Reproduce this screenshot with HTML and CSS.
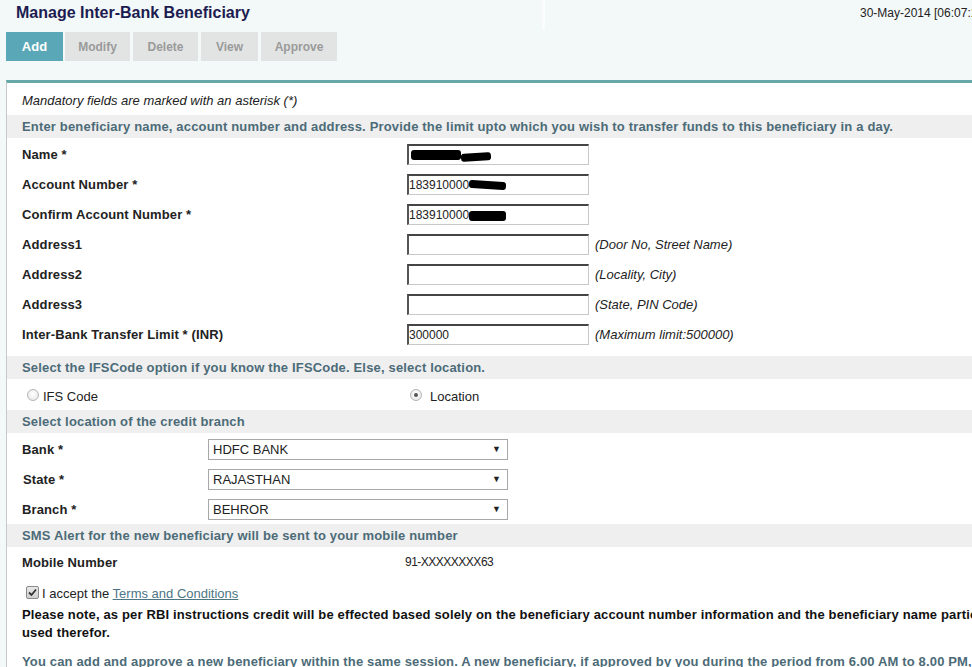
FILE: index.html
```html
<!DOCTYPE html>
<html>
<head>
<meta charset="utf-8">
<link rel="stylesheet" href="styles.css">
</head>
<body>
<div class="page">
  <header class="top">
    <div class="top-left">
      <h1 class="title">Manage Inter-Bank Beneficiary</h1>
      <nav class="tabs">
        <span class="tab active">Add</span>
        <span class="tab">Modify</span>
        <span class="tab">Delete</span>
        <span class="tab">View</span>
        <span class="tab">Approve</span>
      </nav>
    </div>
    <div class="top-right">30-May-2014 [06:07:12 PM]</div>
  </header>

  <main class="panel">
    <p class="mandatory">Mandatory fields are marked with an asterisk (*)</p>
    <div class="band">Enter beneficiary name, account number and address. Provide the limit upto which you wish to transfer funds to this beneficiary in a day.</div>

    <div class="fields">
      <div class="row">
        <label class="lbl">Name *</label>
        <div class="inp"><span class="mask m1"></span><span class="mask m1b"></span></div>
        <span class="hint"></span>
      </div>
      <div class="row">
        <label class="lbl">Account Number *</label>
        <div class="inp">183910000<span class="mask m2"></span></div>
        <span class="hint"></span>
      </div>
      <div class="row">
        <label class="lbl">Confirm Account Number *</label>
        <div class="inp">183910000<span class="mask m3"></span></div>
        <span class="hint"></span>
      </div>
      <div class="row">
        <label class="lbl">Address1</label>
        <div class="inp"></div>
        <span class="hint">(Door No, Street Name)</span>
      </div>
      <div class="row">
        <label class="lbl">Address2</label>
        <div class="inp"></div>
        <span class="hint">(Locality, City)</span>
      </div>
      <div class="row">
        <label class="lbl">Address3</label>
        <div class="inp"></div>
        <span class="hint">(State, PIN Code)</span>
      </div>
      <div class="row">
        <label class="lbl">Inter-Bank Transfer Limit * (INR)</label>
        <div class="inp">300000</div>
        <span class="hint">(Maximum limit:500000)</span>
      </div>
    </div>

    <div class="band">Select the IFSCode option if you know the IFSCode. Else, select location.</div>
    <div class="radios">
      <div class="radio-opt"><span class="radio"></span>IFS Code</div>
      <div class="radio-opt"><span class="radio checked"></span>Location</div>
    </div>

    <div class="band">Select location of the credit branch</div>
    <div class="selects">
      <div class="srow">
        <label class="lbl">Bank *</label>
        <div class="sel"><span>HDFC BANK</span><span class="arrow">▼</span></div>
      </div>
      <div class="srow">
        <label class="lbl lbl-shift">State *</label>
        <div class="sel"><span>RAJASTHAN</span><span class="arrow">▼</span></div>
      </div>
      <div class="srow">
        <label class="lbl">Branch *</label>
        <div class="sel"><span>BEHROR</span><span class="arrow">▼</span></div>
      </div>
    </div>

    <div class="band">SMS Alert for the new beneficiary will be sent to your mobile number</div>
    <div class="mobile">
      <label class="lbl">Mobile Number</label>
      <span class="mobile-val">91-XXXXXXXX63</span>
    </div>

    <div class="accept">
      <span class="check"><svg width="9" height="9" viewBox="0 0 9 9"><path d="M1 4.5 L3.5 7 L8 1.5" fill="none" stroke="#333" stroke-width="1.8"/></svg></span>
      <span>I accept the <a class="link">Terms and Conditions</a></span>
    </div>
    <p class="note">Please note, as per RBI instructions credit will be effected based solely on the beneficiary account number information and the beneficiary name particulars will not be<br>used therefor.</p>
    <p class="info">You can add and approve a new beneficiary within the same session. A new beneficiary, if approved by you during the period from 6.00 AM to 8.00 PM, will be activated</p>
  </main>
</div>
</body>
</html>
```

FILE: styles.css
```css
* { box-sizing: border-box; }
html, body { margin: 0; padding: 0; }
body {
  background: #f3f8f9;
  font-family: "Liberation Sans", Arial, sans-serif;
  color: #222;
  overflow: hidden;
  width: 972px;
  height: 667px;
}
.page { width: 1200px; }

.top {
  display: flex;
  height: 80px;
}
.top-left {
  width: 545px;
  padding-left: 6px;
  position: relative;
}
.top-left::after {
  content: "";
  position: absolute;
  right: 0;
  top: 0;
  width: 3px;
  height: 30px;
  background: #fbfdfd;
}
.title {
  margin: 0;
  padding: 4px 0 0 10px;
  font-size: 16px;
  line-height: 18px;
  font-weight: bold;
  color: #1c1c50;
}
.tabs {
  display: flex;
  margin-top: 10px;
}
.tab {
  height: 29px;
  display: flex;
  align-items: center;
  justify-content: center;
  background: #e2e4e4;
  color: #9a9a9a;
  font-size: 12px;
  font-weight: bold;
  margin-left: 3px;
}
.tab:nth-child(2) { width: 65px; margin-left: 2px; }
.tab:nth-child(3) { width: 65px; }
.tab:nth-child(4) { width: 57px; }
.tab:nth-child(5) { width: 76px; }
.tab.active {
  width: 57px;
  margin-left: 0;
  background: #5aa8b7;
  color: #fff;
  font-size: 13px;
}
.top-right {
  padding: 6px 0 0 315px;
  font-size: 12px;
  white-space: nowrap;
  color: #222;
}

.panel {
  margin-left: 6px;
  background: #fff;
  border-top: 3px solid #67a8a8;
  border-left: 1px solid #c8c8c8;
  height: 600px;
}
.mandatory {
  margin: 0;
  padding: 10px 0 0 15px;
  height: 32px;
  font-size: 13px;
  font-style: italic;
  color: #222;
}
.band {
  background: #efefef;
  color: #4c6b78;
  font-size: 13px;
  font-weight: bold;
  letter-spacing: 0.17px;
  height: 23px;
  line-height: 23px;
  padding-left: 15px;
  white-space: nowrap;
}

.fields { padding: 1px 0 7px; }
.row {
  display: grid;
  grid-template-columns: 385px 188px auto;
  align-items: center;
  height: 30px;
  padding-left: 15px;
}
.lbl {
  font-size: 13px;
  font-weight: bold;
  letter-spacing: 0.12px;
  color: #222;
}
.inp {
  width: 182px;
  height: 21px;
  border-top: 2px solid #444;
  border-left: 2px solid #555;
  border-right: 1px solid #c8c8c8;
  border-bottom: 1px solid #c8c8c8;
  font-size: 12px;
  line-height: 18px;
  display: flex;
  align-items: center;
  white-space: nowrap;
}
.hint {
  font-size: 13px;
  font-style: italic;
  color: #222;
}
.mask {
  display: inline-block;
  background: #000;
  height: 9px;
  border-radius: 3px;
}
.m1 { width: 50px; height: 10px; margin-left: 2px; }
.m1b { width: 30px; height: 8px; margin-top: 4px; transform: rotate(-4deg); }
.m2 { width: 37px; height: 8px; transform: rotate(4deg); }
.m3 { width: 37px; height: 10px; margin-top: 2px; }

.radios {
  display: grid;
  grid-template-columns: 383px auto;
  align-items: center;
  height: 31px;
  padding: 3px 0 0 20px;
  font-size: 13px;
}
.radio-opt { display: flex; align-items: center; }
.radio {
  width: 12px;
  height: 12px;
  border: 1px solid #b4b4b4;
  border-radius: 50%;
  background: radial-gradient(circle at 50% 40%, #fff 0, #e4e4e4 100%);
  margin-right: 4px;
  margin-top: -2px;
  display: inline-flex;
  align-items: center;
  justify-content: center;
}
.radio-opt:nth-child(2) .radio { margin-right: 8px; }
.radio.checked::after {
  content: "";
  width: 4px;
  height: 4px;
  border-radius: 50%;
  background: #555;
}

.selects { padding: 1px 0 0; }
.srow {
  display: grid;
  grid-template-columns: 186px 300px;
  align-items: center;
  height: 30px;
  padding-left: 15px;
}
.lbl-shift { padding-left: 1px; }
.sel {
  height: 21px;
  border: 1px solid #a8a8a8;
  display: flex;
  align-items: center;
  justify-content: space-between;
  padding: 0 6px 0 4px;
  font-size: 13px;
  color: #222;
}
.arrow { font-size: 9px; color: #222; }

.mobile {
  display: grid;
  grid-template-columns: 383px auto;
  align-items: center;
  height: 30px;
  padding-left: 15px;
}
.mobile-val { font-size: 12px; letter-spacing: -0.5px; }

.accept {
  display: flex;
  align-items: center;
  height: 29px;
  padding: 3px 0 0 19px;
  font-size: 13px;
}
.check {
  width: 13px;
  height: 13px;
  border: 1px solid #8a8a8a;
  border-radius: 2px;
  background: linear-gradient(#e8e8e8, #cfcfcf);
  display: inline-flex;
  align-items: center;
  justify-content: center;
  margin-right: 3px;
  margin-top: -2px;
}
.link {
  color: #4d7585;
  text-decoration: underline;
}
.note {
  margin: 0;
  padding-left: 15px;
  font-size: 13px;
  font-weight: bold;
  letter-spacing: 0.15px;
  line-height: 18px;
  color: #111;
  white-space: nowrap;
}
.info {
  margin: 0;
  padding: 12px 0 0 15px;
  font-size: 13px;
  font-weight: bold;
  letter-spacing: 0.15px;
  color: #4c6b78;
  white-space: nowrap;
}
```
